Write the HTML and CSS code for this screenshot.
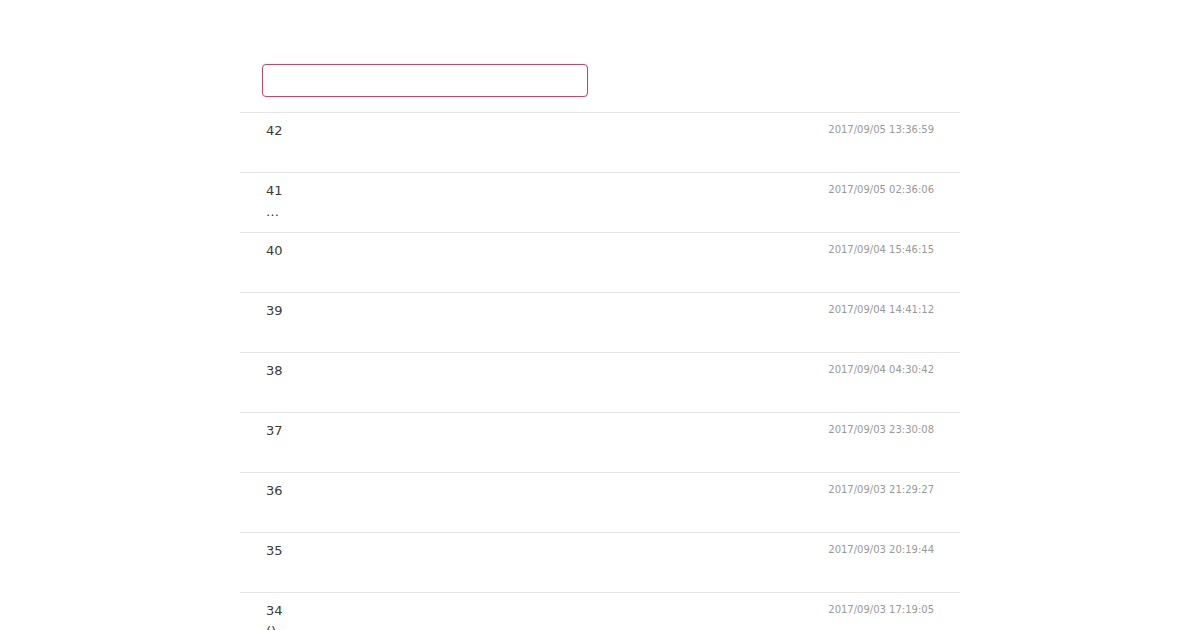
FILE: index.html
```html
<!DOCTYPE html>
<html lang="en">
<head>
    <meta charset="UTF-8">
    <meta name="viewport" content="width=device-width, initial-scale=1.0">
    <title>Memo</title>
    <link rel="stylesheet" href="styles.css">
</head>
<body>
    <div class="container">
        <div class="head">
            <input type="text" class="search">
        </div>

        <ul class="list">
            <li class="item">
                <div class="body"><p class="num">42</p></div>
                <span class="date">2017/09/05 13:36:59</span>
            </li>
            <li class="item">
                <div class="body"><p class="num">41</p><p class="text">…</p></div>
                <span class="date">2017/09/05 02:36:06</span>
            </li>
            <li class="item">
                <div class="body"><p class="num">40</p></div>
                <span class="date">2017/09/04 15:46:15</span>
            </li>
            <li class="item">
                <div class="body"><p class="num">39</p></div>
                <span class="date">2017/09/04 14:41:12</span>
            </li>
            <li class="item">
                <div class="body"><p class="num">38</p></div>
                <span class="date">2017/09/04 04:30:42</span>
            </li>
            <li class="item">
                <div class="body"><p class="num">37</p></div>
                <span class="date">2017/09/03 23:30:08</span>
            </li>
            <li class="item">
                <div class="body"><p class="num">36</p></div>
                <span class="date">2017/09/03 21:29:27</span>
            </li>
            <li class="item">
                <div class="body"><p class="num">35</p></div>
                <span class="date">2017/09/03 20:19:44</span>
            </li>
            <li class="item">
                <div class="body"><p class="num">34</p><p class="text">()</p></div>
                <span class="date">2017/09/03 17:19:05</span>
            </li>
        </ul>
    </div>
</body>
</html>
```

FILE: styles.css
```css
body {
    margin: 0;
    font-family: "DejaVu Sans", sans-serif;
    color: #3a3a3a;
    background: #fff;
}

.container {
    width: 720px;
    margin: 0 auto;
}

.head {
    padding: 64px 22px 15px;

    .search {
        display: block;
        box-sizing: border-box;
        width: 326px;
        height: 33px;
        margin: 0;
        padding: 0 10px;
        border: 1px solid #bd4a6b;
        border-radius: 4px;
        outline: none;
        box-shadow: 0 0 2px rgba(189, 74, 107, 0.2);
        font: inherit;
    }
}

.list {
    list-style: none;
    margin: 0;
    padding: 0;

    .item {
        display: flex;
        justify-content: space-between;
        align-items: flex-start;
        box-sizing: border-box;
        height: 60px;
        padding: 8px 26px 0;
        border-top: 1px solid #e5e5e5;
        overflow: hidden;
    }

    p {
        margin: 0;
        font-size: 13px;
        line-height: 20px;
    }

    .text {
        margin-top: 1px;
    }

    .date {
        font-size: 10px;
        line-height: 16px;
        color: #999;
        margin-top: 1px;
    }
}
```
